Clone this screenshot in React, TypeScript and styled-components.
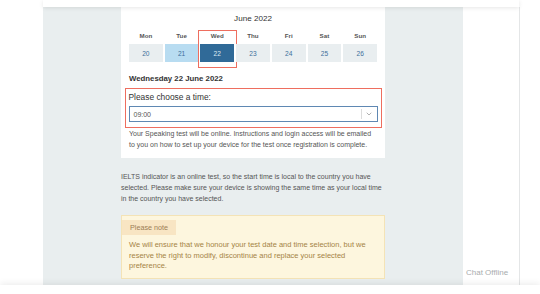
import { ChevronDown } from 'lucide-react';
import { createGlobalStyle, styled } from 'styled-components';

const GlobalStyle = createGlobalStyle`
  html,
  body {
    margin: 0;
    padding: 0;
    background: #ffffff;
  }

  body {
    font-family: 'Liberation Sans', Arial, sans-serif;
    color: #444;
  }
`;

const Page = styled.div`
  width: 540px;
  height: 294px;
  overflow: hidden;
  display: flex;
  flex-direction: column;
  background: #ffffff;
`;

const Header = styled.div`
  position: relative;
  z-index: 2;
  flex: 0 0 7px;
  margin-left: 43px;
  width: 476px;
  background: #ffffff;
  box-shadow: 0 1px 4px rgba(0, 0, 0, 0.1);
`;

const Main = styled.div`
  flex: 1;
  display: flex;
  margin-left: 43px;
  width: 476px;
  border-right: 1px solid #e4e6e7;
  min-height: 0;
`;

const Content = styled.div`
  width: 264px;
  padding: 0 78px;
  background: #e9eeef;
  display: flex;
  flex-direction: column;
`;

const Aside = styled.div`
  flex: 1;
  display: flex;
  flex-direction: column;
  justify-content: flex-end;
  padding: 0 0 7px 3px;
`;

const ChatLabel = styled.span`
  font-size: 8px;
  line-height: 10px;
  color: #a9acae;
`;

const Card = styled.div`
  background: #ffffff;
  padding: 7px 8px 7.5px;
`;

const Month = styled.div`
  text-align: center;
  font-size: 8.1px;
  line-height: 10px;
  color: #333;
`;

const Week = styled.div`
  display: grid;
  grid-template-columns: repeat(7, 1fr);
  column-gap: 2px;
  margin-top: 8px;
`;

const DayColumn = styled.div<{ $marked?: boolean }>`
  position: relative;
  display: flex;
  flex-direction: column;
  gap: 4px;

  &::after {
    content: '';
    display: ${({ $marked }) => ($marked ? 'block' : 'none')};
    position: absolute;
    inset: -2px -3px -6px -2px;
    border: 1.5px solid #ee6e5f;
  }
`;

const DayName = styled.span`
  text-align: center;
  font-size: 6.2px;
  line-height: 8px;
  font-weight: 700;
  color: #555;
`;

const DateCell = styled.div<{ $state?: 'near' | 'active' }>`
  height: 18px;
  display: flex;
  align-items: center;
  justify-content: center;
  font-size: 6.6px;
  background: ${({ $state }) =>
    $state === 'active' ? '#306a98' : $state === 'near' ? '#b8dcf1' : '#e9eef0'};
  color: ${({ $state }) => ($state === 'active' ? '#dfe9f2' : '#3d6e9b')};
`;

const SelectedDate = styled.div`
  margin-top: 12px;
  font-size: 7.8px;
  line-height: 10px;
  font-weight: 700;
  color: #333;
`;

const TimeBox = styled.div`
  margin: 4px -5px 0 -4px;
  padding: 3px 3.5px 4.5px 2.5px;
  border: 1.5px solid #ee6e5f;
`;

const TimeLabel = styled.div`
  font-size: 8.4px;
  line-height: 10px;
  color: #333;
`;

const Select = styled.div`
  margin-top: 4px;
  height: 16px;
  box-sizing: border-box;
  border: 1px solid #5f88b3;
  display: flex;
  align-items: center;
  padding-left: 4px;
  font-size: 7px;
  color: #555;
`;

const SelectValue = styled.span`
  flex: 1;
`;

const SelectDivider = styled.span`
  width: 1px;
  height: 10px;
  background: #dcdcdc;
`;

const SelectArrow = styled.span`
  width: 15px;
  display: flex;
  align-items: center;
  justify-content: center;
  color: #8a8a8a;
`;

const SmallText = styled.p<{ $top?: number }>`
  margin: ${({ $top }) => $top ?? 0}px 0 0;
  font-size: 7px;
  line-height: 11px;
  color: #555;
`;

const Note = styled.div`
  margin-top: 10.5px;
  background: #fdf6de;
  border: 1px solid #f4e3b6;
  padding-bottom: 6px;
`;

const NoteTab = styled.div`
  display: inline-block;
  height: 15px;
  line-height: 15px;
  padding: 0 8px;
  background: #f8e5c3;
  font-size: 7.2px;
  color: #9c7d55;
`;

const NoteBody = styled.p`
  margin: 5.5px 0 0;
  padding: 0 8px 0 7px;
  font-size: 7.5px;
  line-height: 10.5px;
  color: #a58446;
`;

const Footer = styled.div`
  position: relative;
  z-index: 2;
  flex: 0 0 9px;
  background: #ffffff;
  box-shadow: 0 -2px 6px rgba(0, 0, 0, 0.07);
`;

const days = [
  { name: 'Mon', date: 20 },
  { name: 'Tue', date: 21, state: 'near' as const },
  { name: 'Wed', date: 22, state: 'active' as const },
  { name: 'Thu', date: 23 },
  { name: 'Fri', date: 24 },
  { name: 'Sat', date: 25 },
  { name: 'Sun', date: 26 },
];

const App = () => {
  return (
    <Page>
      <GlobalStyle />
      <Header />
      <Main>
        <Content>
          <Card>
            <Month>June 2022</Month>
            <Week>
              {days.map((day) => (
                <DayColumn key={day.name} $marked={day.state === 'active'}>
                  <DayName>{day.name}</DayName>
                  <DateCell $state={day.state}>{day.date}</DateCell>
                </DayColumn>
              ))}
            </Week>
            <SelectedDate>Wednesday 22 June 2022</SelectedDate>
            <TimeBox>
              <TimeLabel>Please choose a time:</TimeLabel>
              <Select>
                <SelectValue>09:00</SelectValue>
                <SelectDivider />
                <SelectArrow>
                  <ChevronDown size={8} strokeWidth={2} />
                </SelectArrow>
              </Select>
            </TimeBox>
            <SmallText $top={0.5}>
              Your Speaking test will be online. Instructions and login access
              will be emailed to you on how to set up your device for the test
              once registration is complete.
            </SmallText>
          </Card>
          <SmallText $top={13.5}>
            IELTS indicator is an online test, so the start time is local to the
            country you have selected. Please make sure your device is showing
            the same time as your local time in the country you have selected.
          </SmallText>
          <Note>
            <NoteTab>Please note</NoteTab>
            <NoteBody>
              We will ensure that we honour your test date and time selection,
              but we reserve the right to modify, discontinue and replace your
              selected preference.
            </NoteBody>
          </Note>
        </Content>
        <Aside>
          <ChatLabel>Chat Offline</ChatLabel>
        </Aside>
      </Main>
      <Footer />
    </Page>
  );
};

export default App;
